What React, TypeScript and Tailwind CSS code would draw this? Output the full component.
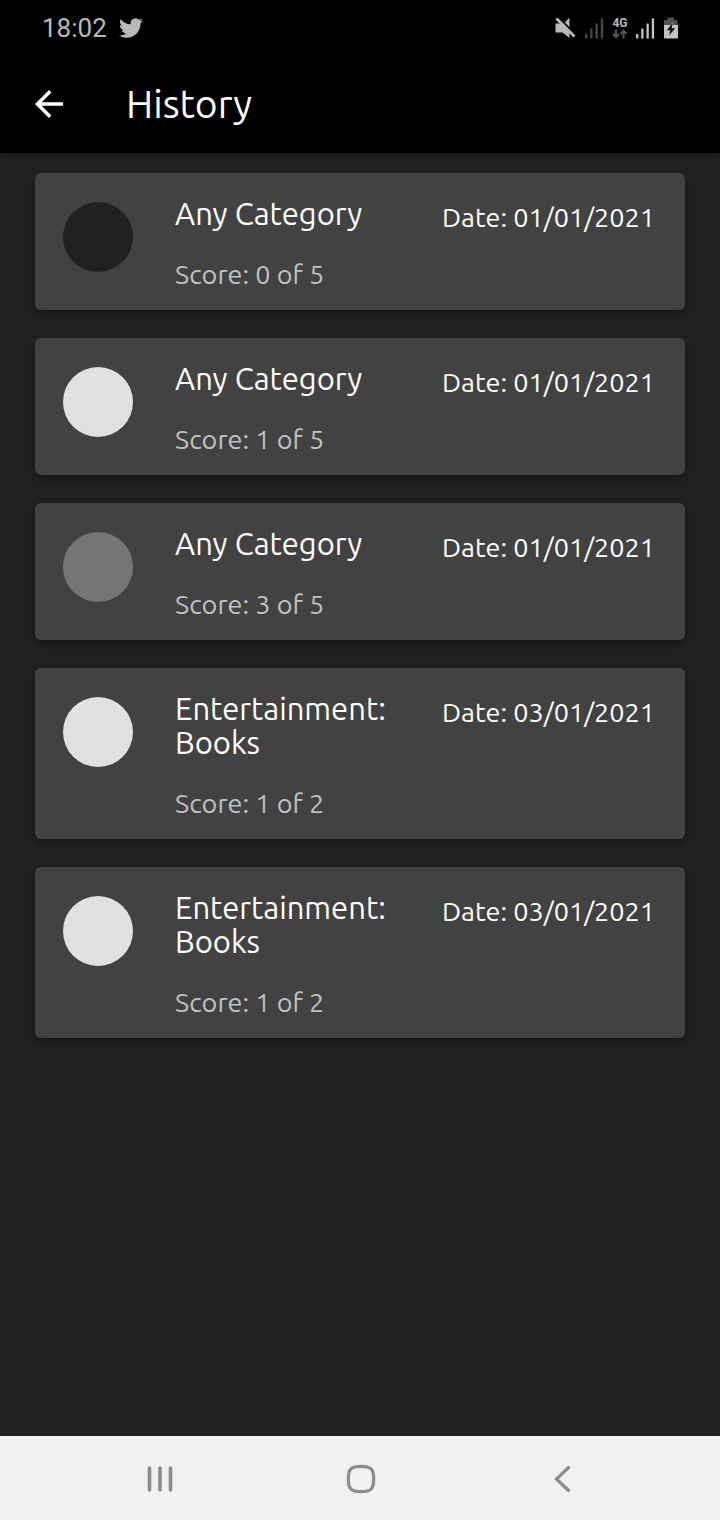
type Entry = { category: string; score: string; date: string; dot: string };

const entries: Entry[] = [
  { category: "Any Category", score: "0 of 5", date: "01/01/2021", dot: "bg-[#212121]" },
  { category: "Any Category", score: "1 of 5", date: "01/01/2021", dot: "bg-[#e0e0e0]" },
  { category: "Any Category", score: "3 of 5", date: "01/01/2021", dot: "bg-[#757575]" },
  { category: "Entertainment: Books", score: "1 of 2", date: "03/01/2021", dot: "bg-[#e0e0e0]" },
  { category: "Entertainment: Books", score: "1 of 2", date: "03/01/2021", dot: "bg-[#e0e0e0]" },
];

function Signal({ className }: { className: string }) {
  return (
    <svg className={className} width="19" height="21" viewBox="0 0 19 21" fill="currentColor" aria-hidden="true">
      <rect x="0" y="16" width="2.3" height="4.5" rx="0.6" />
      <rect x="5.2" y="10.5" width="2.3" height="10" rx="0.6" />
      <rect x="10.5" y="5.5" width="2.3" height="15" rx="0.6" />
      <rect x="15.8" y="0.3" width="2.3" height="20.2" rx="0.6" />
    </svg>
  );
}

function StatusBar() {
  return (
    <div className="flex h-14 items-center justify-between pr-[41px] pl-[42px] text-[#b9b9b9]">
      <div className="flex items-center gap-3">
        <span className="font-[Roboto,sans-serif] text-[26px] leading-8">18:02</span>
        <svg width="24" height="24" viewBox="0 0 24 24" fill="currentColor" aria-hidden="true">
          <path d="M23.954 4.569a10 10 0 0 1-2.825.775 4.958 4.958 0 0 0 2.163-2.723c-.951.555-2.005.959-3.127 1.184a4.92 4.92 0 0 0-8.384 4.482C7.691 8.094 4.066 6.13 1.64 3.161a4.822 4.822 0 0 0-.666 2.475c0 1.71.87 3.213 2.188 4.096a4.904 4.904 0 0 1-2.228-.616v.061a4.923 4.923 0 0 0 3.946 4.827 4.996 4.996 0 0 1-2.212.085 4.937 4.937 0 0 0 4.604 3.417 9.868 9.868 0 0 1-6.102 2.105c-.39 0-.779-.023-1.17-.067a13.995 13.995 0 0 0 7.557 2.209c9.054 0 13.999-7.496 13.999-13.986 0-.209 0-.42-.015-.63a9.936 9.936 0 0 0 2.46-2.548z" />
        </svg>
      </div>
      <div className="flex items-center gap-2">
        <svg width="22" height="24" viewBox="0 0 22 24" fill="currentColor" aria-hidden="true">
          <path d="M9 7.500L14.500 1.500V13Z" />
          <path d="M3 1.500L20.500 19" stroke="#000" strokeWidth="2.500" />
          <path d="M0.500 7.500H5.500L14.500 15.500V22L7.500 16.500H0.500Z" />
          <path d="M1.500 2.500L19.500 20.500" stroke="currentColor" strokeWidth="2.800" />
        </svg>
        <Signal className="text-[#484848]" />
        <div className="flex w-4 flex-col items-center">
          <span className="font-[Roboto,sans-serif] text-[12px] leading-3 font-bold">4G</span>
          <svg className="text-[#555555]" width="16" height="10" viewBox="0 0 16 10" fill="none" stroke="currentColor" strokeWidth="2" aria-hidden="true">
            <path d="M4 0.500V8M1 5L4 8.300L7 5M11.500 9.500V2M8.500 5L11.500 1.700L14.500 5" />
          </svg>
        </div>
        <Signal className="text-[#c4c4c4]" />
        <svg width="16" height="22" viewBox="0 0 16 22" aria-hidden="true">
          <path d="M4.500 0.500H11V3H14.500V8.500H1V3H4.500Z" fill="#505050" />
          <path d="M1 8H15V20.500Q15 21.500 14 21.500H2Q1 21.500 1 20.500Z" fill="#c4c4c4" />
          <path d="M9.500 5.500L3.500 13.500H7L6 19L12.500 11H9Z" fill="#000" stroke="#c4c4c4" strokeWidth="0.500" />
        </svg>
      </div>
    </div>
  );
}

function HistoryCard({ entry }: { entry: Entry }) {
  return (
    <li className="flex items-start rounded-md bg-[#424242] pt-6 pr-[30px] pb-5 pl-7 shadow-[0_4px_8px_rgba(0,0,0,0.35)]">
      <span className={`mt-[5px] size-[70px] shrink-0 rounded-full ${entry.dot}`} />
      <div className="ml-[42px] min-w-0 flex-1">
        <h2 className="text-[31px] leading-[34px] text-white">{entry.category}</h2>
        <p className="mt-7 text-[27px] leading-[31px] text-[#c0c0c0]">Score: {entry.score}</p>
      </div>
      <p className="mt-[5px] ml-4 shrink-0 text-[27px] leading-[31px] text-white">Date: {entry.date}</p>
    </li>
  );
}

export default function App() {
  return (
    <div className="flex min-h-screen flex-col bg-[#212121] font-['Ubuntu','Noto_Sans',sans-serif]">
      <header className="bg-black shadow-[0_2px_8px_rgba(0,0,0,0.4)]">
        <StatusBar />
        <div className="flex h-[97px] items-center px-[35px] pb-px">
          <button type="button" aria-label="Back" className="text-white">
            <svg width="28" height="28" viewBox="4 4 16 16" fill="currentColor" aria-hidden="true">
              <path d="M20 11H7.830l5.590-5.590L12 4l-8 8 8 8 1.410-1.410L7.830 13H20v-2z" />
            </svg>
          </button>
          <h1 className="ml-[63px] text-[39px] leading-[44px] text-white">History</h1>
        </div>
      </header>
      <main className="flex-1 px-[35px] py-5">
        <ul className="flex flex-col gap-7">
          {entries.map((entry, i) => (
            <HistoryCard key={i} entry={entry} />
          ))}
        </ul>
      </main>
      <nav className="flex h-[84px] items-center justify-around bg-[#f1f1f1] pt-[2px] pr-[57px] pl-[59px] text-[#8c8c8c]">
        <button type="button" aria-label="Recent apps">
          <svg width="30" height="30" viewBox="0 0 30 30" fill="none" stroke="currentColor" strokeWidth="3.600" strokeLinecap="round" aria-hidden="true">
            <path d="M4.500 4V26M15 4V26M25.500 4V26" />
          </svg>
        </button>
        <button type="button" aria-label="Home">
          <svg width="30" height="30" viewBox="0 0 30 30" fill="none" stroke="currentColor" strokeWidth="3.200" aria-hidden="true">
            <path d="M15 2.300C25 2.300 27.700 5 27.700 15S25 27.700 15 27.700S2.300 25 2.300 15S5 2.300 15 2.300Z" />
          </svg>
        </button>
        <button type="button" aria-label="Navigate back">
          <svg width="30" height="30" viewBox="0 0 30 30" fill="none" stroke="currentColor" strokeWidth="3.200" strokeLinecap="round" aria-hidden="true">
            <path d="M21.500 3.500L9.500 15L21.500 26.500" />
          </svg>
        </button>
      </nav>
    </div>
  );
}
